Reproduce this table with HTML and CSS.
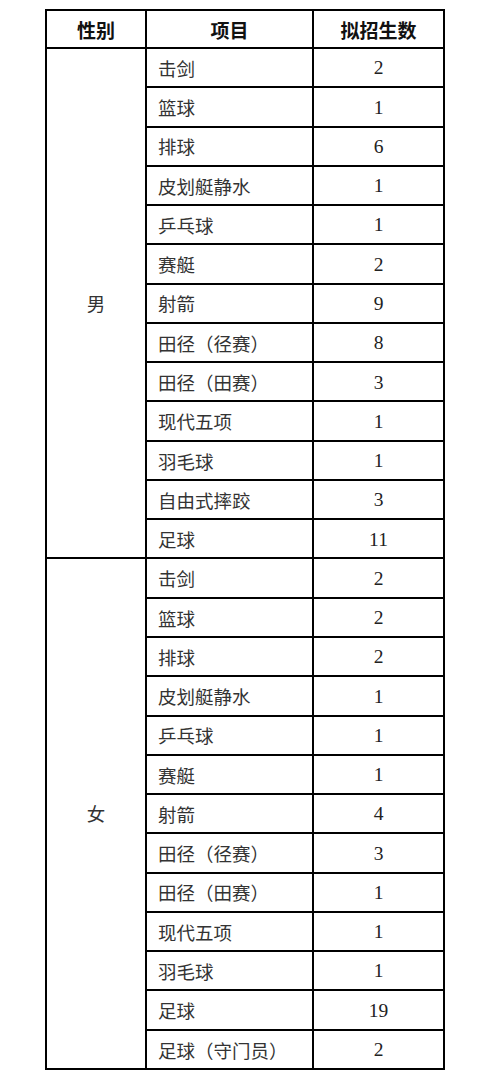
FILE: index.html
```html
<!DOCTYPE html>
<html lang="zh-CN">
<head>
<meta charset="utf-8">
<title>拟招生数</title>
<link rel="stylesheet" href="styles.css">
</head>
<body>
<table class="quota">
  <colgroup>
    <col class="c-sex">
    <col class="c-item">
    <col class="c-num">
  </colgroup>
  <thead>
    <tr class="head-row"><th>性别</th><th>项目</th><th>拟招生数</th></tr>
  </thead>
  <tbody>
    <tr><td class="sex" rowspan="13">男</td><td class="item">击剑</td><td class="num">2</td></tr>
    <tr><td class="item">篮球</td><td class="num">1</td></tr>
    <tr><td class="item">排球</td><td class="num">6</td></tr>
    <tr><td class="item">皮划艇静水</td><td class="num">1</td></tr>
    <tr><td class="item">乒乓球</td><td class="num">1</td></tr>
    <tr><td class="item">赛艇</td><td class="num">2</td></tr>
    <tr><td class="item">射箭</td><td class="num">9</td></tr>
    <tr><td class="item">田径（径赛）</td><td class="num">8</td></tr>
    <tr><td class="item">田径（田赛）</td><td class="num">3</td></tr>
    <tr><td class="item">现代五项</td><td class="num">1</td></tr>
    <tr><td class="item">羽毛球</td><td class="num">1</td></tr>
    <tr><td class="item">自由式摔跤</td><td class="num">3</td></tr>
    <tr><td class="item">足球</td><td class="num">11</td></tr>
    <tr><td class="sex" rowspan="13">女</td><td class="item">击剑</td><td class="num">2</td></tr>
    <tr><td class="item">篮球</td><td class="num">2</td></tr>
    <tr><td class="item">排球</td><td class="num">2</td></tr>
    <tr><td class="item">皮划艇静水</td><td class="num">1</td></tr>
    <tr><td class="item">乒乓球</td><td class="num">1</td></tr>
    <tr><td class="item">赛艇</td><td class="num">1</td></tr>
    <tr><td class="item">射箭</td><td class="num">4</td></tr>
    <tr><td class="item">田径（径赛）</td><td class="num">3</td></tr>
    <tr><td class="item">田径（田赛）</td><td class="num">1</td></tr>
    <tr><td class="item">现代五项</td><td class="num">1</td></tr>
    <tr><td class="item">羽毛球</td><td class="num">1</td></tr>
    <tr><td class="item">足球</td><td class="num">19</td></tr>
    <tr><td class="item">足球（守门员）</td><td class="num">2</td></tr>
  </tbody>
</table>
</body>
</html>
```

FILE: styles.css
```css
html, body {
  margin: 0;
  padding: 0;
  background: #ffffff;
}

.quota {
  border-collapse: collapse;
  table-layout: fixed;
  width: 398px;
  margin: 9px 0 0 45px;
  font-family: "Noto Sans CJK SC", sans-serif;
  color: #2a2a2a;
  text-spacing-trim: space-all;
  font-feature-settings: "chws" 0, "halt" 0, "palt" 0;
}

.c-sex { width: 100px; }
.c-item { width: 167px; }
.c-num { width: 131px; }

.quota th,
.quota td {
  border: 2px solid #000;
  padding: 0;
  line-height: 1;
}

.quota tbody tr {
  height: 39.27px;
}

.quota .head-row {
  height: 38px;
}

.quota th {
  font-weight: 700;
  font-size: 19px;
  color: #111;
  text-align: center;
}

.quota .sex {
  text-align: center;
  font-size: 18.5px;
  color: #333;
}

.quota .item {
  text-align: left;
  padding-left: 11px;
  padding-top: 1px;
  font-size: 18.5px;
  color: #333;
}

.quota .num {
  text-align: center;
  padding-top: 1px;
  font-family: "Liberation Serif", "Noto Sans CJK SC", serif;
  font-size: 19.5px;
  color: #222;
}
```
